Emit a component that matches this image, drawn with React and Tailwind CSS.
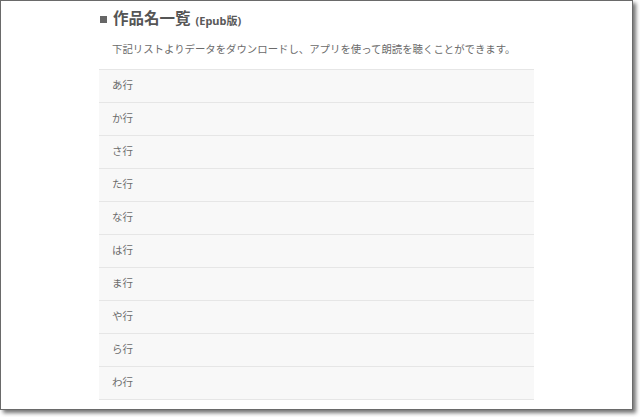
export default function App() {
  const rows = ["あ行", "か行", "さ行", "た行", "な行", "は行", "ま行", "や行", "ら行", "わ行"];
  return (
    <div className="w-[640px] h-[417px] bg-white overflow-hidden" style={{ fontFamily: '"Noto Sans", "Noto Sans CJK JP", sans-serif' }}>
      <div className="w-[633px] h-[410px] bg-white border border-[#6a6a6a] shadow-[3px_3px_4px_rgba(0,0,0,0.55)]">
        <div className="mx-auto w-[435px] pt-[7px]">
          <div className="flex items-center h-[22px]">
            <span className="w-[7px] h-[7px] bg-[#666] ml-[1px] mr-[6px] mt-[1px]"></span>
            <span className="text-[15.5px] font-bold text-[#555] leading-none">作品名一覧</span>
            <span className="text-[11px] font-bold text-[#5a5a5a] ml-[5px] mt-[2px] leading-none">(Epub版)</span>
          </div>
          <p className="mt-[11px] ml-[13px] text-[10.4px] leading-[16px] text-[#6b6b6b]">
            下記リストよりデータをダウンロードし、アプリを使って朗読を聴くことができます。
          </p>
          <div className="mt-[12px] border-b border-[#e6e6e6]">
            {rows.map((r) => (
              <div key={r} className="h-[33px] border-t border-[#e6e6e6] bg-[#f8f8f8] flex items-center pl-[13px] text-[10.5px] text-[#6b6b6b]">
                {r}
              </div>
            ))}
          </div>
        </div>
      </div>
    </div>
  );
}
